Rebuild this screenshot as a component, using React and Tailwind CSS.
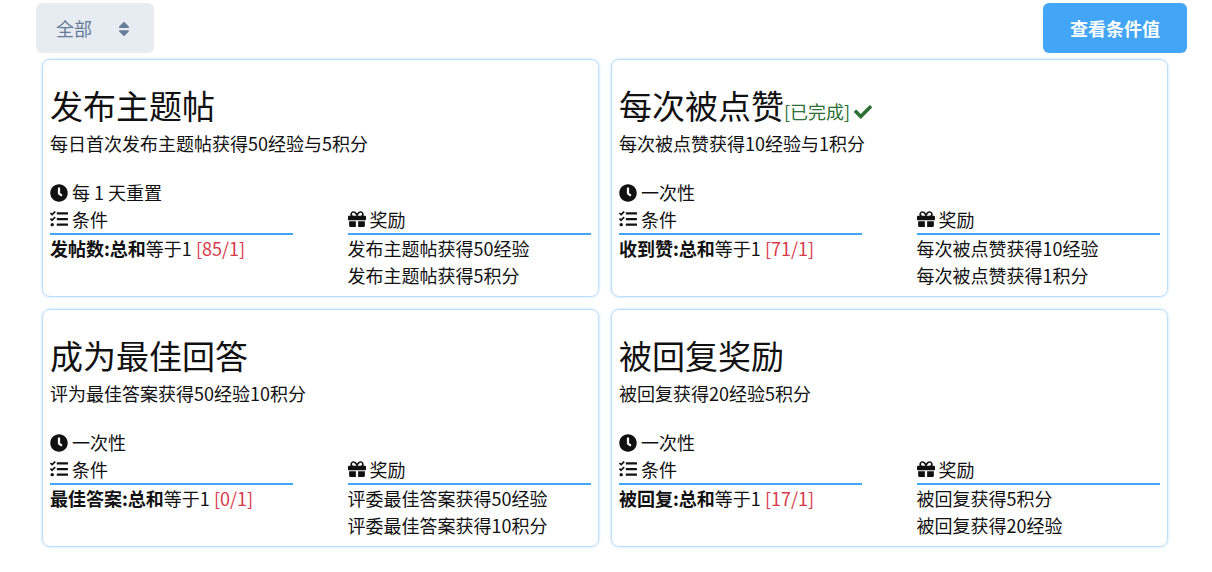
import { FaCheck, FaClock, FaGift, FaSort, FaTasks } from "react-icons/fa";

const tasks = [
  {
    title: "发布主题帖",
    summary: "每日首次发布主题帖获得50经验与5积分",
    cycle: "每 1 天重置",
    condition: "发帖数:总和",
    progress: "[85/1]",
    rewards: ["发布主题帖获得50经验", "发布主题帖获得5积分"],
  },
  {
    title: "每次被点赞",
    done: true,
    summary: "每次被点赞获得10经验与1积分",
    cycle: "一次性",
    condition: "收到赞:总和",
    progress: "[71/1]",
    rewards: ["每次被点赞获得10经验", "每次被点赞获得1积分"],
  },
  {
    title: "成为最佳回答",
    summary: "评为最佳答案获得50经验10积分",
    cycle: "一次性",
    condition: "最佳答案:总和",
    progress: "[0/1]",
    rewards: ["评委最佳答案获得50经验", "评委最佳答案获得10积分"],
  },
  {
    title: "被回复奖励",
    summary: "被回复获得20经验5积分",
    cycle: "一次性",
    condition: "被回复:总和",
    progress: "[17/1]",
    rewards: ["被回复获得5积分", "被回复获得20经验"],
  },
];

function SectionHeading({ icon: Icon, children }) {
  return (
    <h3 className="flex items-center gap-1 border-b-2 border-[#42a5f5] pb-px leading-[26px]">
      <Icon className="shrink-0" />
      {children}
    </h3>
  );
}

function TaskCard({ task }) {
  return (
    <article className="rounded-lg border border-[#bbdefb] p-[7px] shadow-[0_0_3px_#bbdefb]">
      <h2 className="mt-[18px] mb-[5px] flex items-baseline text-[33px] leading-10">
        {task.title}
        {task.done && (
          <span className="flex items-center gap-1 text-lg leading-[27px] text-[#2d7035]">
            [已完成]
            <FaCheck />
          </span>
        )}
      </h2>
      <p>{task.summary}</p>
      <p className="mt-[22px] flex items-center gap-1">
        <FaClock className="shrink-0" />
        {task.cycle}
      </p>
      <div className="flex justify-between">
        <section className="w-[45%]">
          <SectionHeading icon={FaTasks}>条件</SectionHeading>
          <p>
            <b>{task.condition}</b>等于1 <span className="text-[#d83a4a]">{task.progress}</span>
          </p>
        </section>
        <section className="w-[45%]">
          <SectionHeading icon={FaGift}>奖励</SectionHeading>
          <ul>
            {task.rewards.map((reward) => (
              <li key={reward}>{reward}</li>
            ))}
          </ul>
        </section>
      </div>
    </article>
  );
}

export default function App() {
  return (
    <main className="bg-white pt-[3px] pr-[25px] pb-6 pl-9 font-['Noto_Sans_CJK_SC',sans-serif] text-lg leading-[27px] text-[#111]">
      <div className="flex items-center justify-between">
        <div className="relative">
          <select
            aria-label="筛选"
            className="h-[50px] w-[118px] appearance-none rounded-md bg-[#e7ebf2] pl-5 text-lg text-[#667c99]"
          >
            <option>全部</option>
          </select>
          <FaSort className="pointer-events-none absolute top-[17px] right-[21px] text-[#667c99]" />
        </div>
        <button type="button" className="h-[50px] rounded-md bg-[#42a5f5] px-[27px] font-bold text-white">
          查看条件值
        </button>
      </div>
      <div className="mt-1.5 mr-[19px] ml-1.5 grid grid-cols-2 gap-3">
        {tasks.map((task) => (
          <TaskCard key={task.title} task={task} />
        ))}
      </div>
    </main>
  );
}
